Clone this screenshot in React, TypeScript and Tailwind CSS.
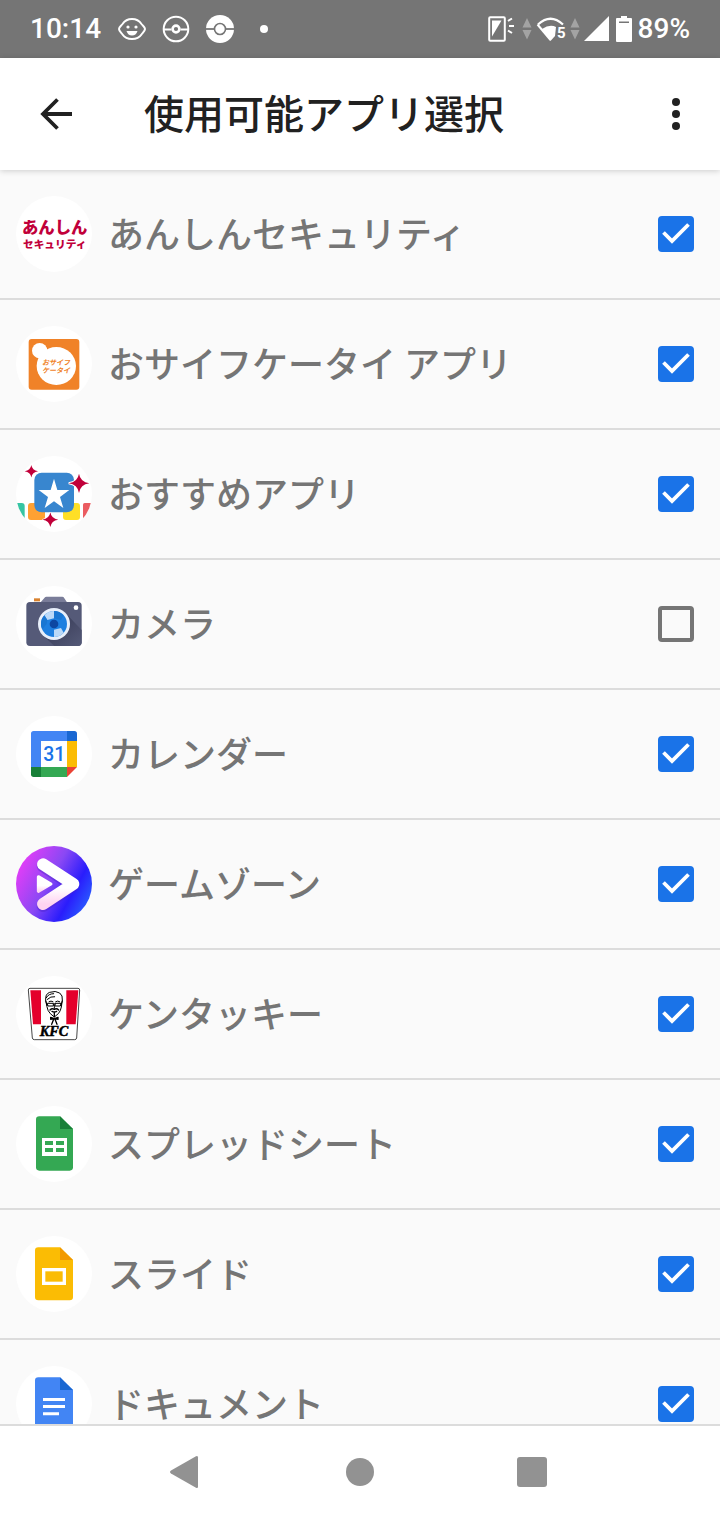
import { useState, type ReactNode } from "react";

function Badge({ children }: { children: ReactNode }) {
  return (
    <svg
      viewBox="0 0 228 228"
      className="size-[76px] shrink-0 rounded-full bg-white"
      aria-hidden="true"
    >
      {children}
    </svg>
  );
}

function SecurityIcon() {
  return (
    <Badge>
      <g fill="#c1003a" fontWeight="900" textAnchor="middle">
        <text x="116" y="110" fontSize="49">あんしん</text>
        <text x="116" y="157" fontSize="32">セキュリティ</text>
      </g>
    </Badge>
  );
}

function WalletIcon() {
  return (
    <Badge>
      <rect x="38" y="39" width="152" height="152" rx="9" fill="#f08228" />
      <circle cx="71" cy="74" r="23" fill="#fff" />
      <path d="M60 92q16 0 12 18l24-28q-12 2-12-12z" fill="#fff" />
      <ellipse cx="121" cy="120" rx="59" ry="57" fill="#fff" />
      <g fill="#f08228" fontWeight="700" fontStyle="italic" textAnchor="middle">
        <text x="120" y="118" fontSize="21">おサイフ</text>
        <text x="120" y="141" fontSize="21">ケータイ</text>
      </g>
    </Badge>
  );
}

const sparkle = "M0-29Q4-4 31 0Q4 4 0 29Q-4 4-31 0Q-4-4 0-29Z";

function RecommendIcon() {
  return (
    <Badge>
      <rect x="-20" y="141" width="46" height="51" rx="9" fill="#36c5a3" />
      <rect x="36" y="141" width="51" height="51" rx="9" fill="#ffa133" />
      <rect x="141" y="141" width="51" height="51" rx="9" fill="#ffdf26" />
      <rect x="201" y="141" width="50" height="51" rx="5" fill="#eb5c61" />
      <rect x="55" y="50" width="119" height="119" rx="22" fill="#3886cf" />
      <path
        d="M114 68l10 34 36 0-28 21 10 33-28-20-28 20 10-33-28-21 36 0z"
        fill="#fff"
      />
      <g fill="#c1003a" stroke="#fff" strokeWidth="6" paintOrder="stroke">
        <path d={sparkle} transform="translate(46 46) scale(.65)" />
        <path d={sparkle} transform="translate(189 82)" />
        <path d={sparkle} transform="translate(103 191) scale(.76)" />
      </g>
    </Badge>
  );
}

function CameraIcon() {
  return (
    <Badge>
      <defs>
        <linearGradient id="camera-shade" x1="0" y1="0" x2="1" y2="1">
          <stop offset=".3" stopColor="#3c405c" />
          <stop offset="1" stopColor="#555a78" />
        </linearGradient>
      </defs>
      <rect x="54" y="37" width="18" height="9" fill="#d9822f" />
      <path d="M74 49L87 34q1-2 4-2h48q3 0 4 2l10 15z" fill="#7a7d99" />
      <rect x="31" y="48" width="166" height="132" rx="11" fill="#555a78" />
      <path d="M82 149l33 31h71q11 0 11-11v-37l-45-47z" fill="url(#camera-shade)" />
      <circle cx="180" cy="65" r="7" fill="#fff" />
      <circle cx="114" cy="114" r="48" fill="#e8effa" />
      <circle cx="114" cy="114" r="39" fill="#1e7fe0" />
      <path d="M85 88a39 39 0 0 1 29-13v22l-20 5z" fill="#bbd9f8" />
      <path d="M143 140a39 39 0 0 1-29 13v-22l21-5z" fill="#bbd9f8" />
      <path d="M114 75a39 39 0 0 1 29 13l-8 14-21-5z" fill="#1976d2" />
      <path d="M85 88a39 39 0 0 0-6 42l13-16 2-12z" fill="#1976d2" />
      <circle cx="114" cy="114" r="13" fill="#0d47a1" />
    </Badge>
  );
}

function CalendarIcon() {
  return (
    <Badge>
      <path d="M53 45h100v30H75v78H45V53q0-8 8-8z" fill="#4285f4" />
      <path d="M153 45h22q8 0 8 8v22h-30z" fill="#1967d2" />
      <path d="M153 75h30v78h-30z" fill="#fbbc04" />
      <path d="M75 153h78v30H75z" fill="#34a853" />
      <path d="M45 153h30v30H53q-8 0-8-8z" fill="#188038" />
      <path d="M153 153h30l-30 30z" fill="#ea4335" />
      <text
        x="115"
        y="136"
        fontSize="58"
        fontWeight="500"
        textAnchor="middle"
        fill="#1a73e8"
        className="font-['Roboto',sans-serif]"
      >
        31
      </text>
    </Badge>
  );
}

function GameZoneIcon() {
  return (
    <Badge>
      <defs>
        <linearGradient id="zone-bg" x1="0" y1=".2" x2="1" y2=".75">
          <stop offset="0" stopColor="#ee3cf8" />
          <stop offset=".45" stopColor="#8a48f4" />
          <stop offset=".75" stopColor="#2a1dfc" />
          <stop offset="1" stopColor="#2a62ff" />
        </linearGradient>
        <linearGradient id="zone-arrow" x1="0" y1="0" x2="0" y2="1">
          <stop offset="0" stopColor="#fff" />
          <stop offset=".6" stopColor="#fff" />
          <stop offset="1" stopColor="#ffd3f1" />
        </linearGradient>
      </defs>
      <rect width="228" height="228" fill="url(#zone-bg)" />
      <g strokeLinejoin="round" strokeLinecap="round">
        <path
          d="M81 60l91 58-91 61"
          fill="none"
          stroke="#4a22c8"
          strokeOpacity=".4"
          strokeWidth="38"
        />
        <path d="M81 55l91 59-91 60" fill="none" stroke="url(#zone-arrow)" strokeWidth="36" />
        <path
          d="M67 92l38 22-38 22z"
          fill="url(#zone-arrow)"
          stroke="url(#zone-arrow)"
          strokeWidth="9"
        />
      </g>
    </Badge>
  );
}

function ChickenIcon() {
  return (
    <Badge>
      <path
        d="M42 37h144q5 0 5 5l-9 144q-1 5-6 5H55q-5 0-6-5L37 42q0-5 5-5z"
        fill="#fff"
        stroke="#222"
        strokeWidth="2.5"
      />
      <path d="M43 43h32v102H51z" fill="#e4002b" />
      <path d="M151 43h36l-8 102h-28z" fill="#e4002b" />
      <g fill="none" stroke="#000" strokeWidth="3" strokeLinecap="round" strokeLinejoin="round">
        <path d="M89 72q-2-18 12-23 18-6 30 2 10 7 8 22l-3 20q-2 12-9 20l-12 10-12-10q-8-8-10-20z" />
        <path d="M91 65q6-12 22-12M94 70q10-10 22-8M89 74l4 14M139 74l-4 14" />
        <path d="M95 82h17v8H97zM118 82h17l-2 8h-15zM112 84h6" />
        <path d="M99 77q6-4 12 0M119 77q6-4 12 0M115 88v9" />
        <path d="M102 102q6-6 13-2 7-4 13 2M108 106q7 4 14 0M115 108v14" strokeWidth="4" />
        <path d="M104 124l11 4 11-4M104 124v6l11-2 11 2v-6M113 130l-6 15M117 130l6 15" strokeWidth="4" />
      </g>
      <text
        x="114"
        y="181"
        fontSize="43"
        fontWeight="700"
        fontStyle="italic"
        textAnchor="middle"
        stroke="#000"
        strokeWidth="1.5"
        className="font-['Liberation_Serif',serif]"
      >
        KFC
      </text>
    </Badge>
  );
}

function SheetsIcon() {
  return (
    <Badge>
      <path d="M70 31h62l39 38v115q0 10-10 10H70q-10 0-10-10V41q0-10 10-10z" fill="#34a853" />
      <path d="M132 31l39 38h-39z" fill="#188038" />
      <path
        d="M78 96h75v54H78zM87 105v12h24v-12zM120 105v12h24v-12zM87 126v12h24v-12zM120 126v12h24v-12z"
        fill="#fff"
        fillRule="evenodd"
      />
    </Badge>
  );
}

function SlidesIcon() {
  return (
    <Badge>
      <path d="M67 34h65l39 38v111q0 10-10 10H67q-10 0-10-10V44q0-10 10-10z" fill="#fbbc04" />
      <path d="M132 34l39 38h-39z" fill="#f29900" />
      <rect x="83" y="101" width="62" height="41" fill="none" stroke="#fff" strokeWidth="10" />
    </Badge>
  );
}

function DocsIcon() {
  return (
    <Badge>
      <path d="M67 34h65l39 38v111q0 10-10 10H67q-10 0-10-10V44q0-10 10-10z" fill="#4285f4" />
      <path d="M132 34l39 38h-39z" fill="#1967d2" />
      <path d="M81 96h66v9H81zM81 117h66v9H81zM81 139h48v9H81z" fill="#fff" />
    </Badge>
  );
}

const apps = [
  { name: "あんしんセキュリティ", icon: <SecurityIcon />, allowed: true },
  { name: "おサイフケータイ アプリ", icon: <WalletIcon />, allowed: true },
  { name: "おすすめアプリ", icon: <RecommendIcon />, allowed: true },
  { name: "カメラ", icon: <CameraIcon />, allowed: false },
  { name: "カレンダー", icon: <CalendarIcon />, allowed: true },
  { name: "ゲームゾーン", icon: <GameZoneIcon />, allowed: true },
  { name: "ケンタッキー", icon: <ChickenIcon />, allowed: true },
  { name: "スプレッドシート", icon: <SheetsIcon />, allowed: true },
  { name: "スライド", icon: <SlidesIcon />, allowed: true },
  { name: "ドキュメント", icon: <DocsIcon />, allowed: true },
];

function DataArrows() {
  return (
    <svg viewBox="0 0 10 22" className="h-[22px] w-[10px]" fill="#a3a3a3">
      <path d="M5 0l4.500 9.500h-9zM5 21.500l4.500-9.500h-9z" />
    </svg>
  );
}

function StatusBar() {
  return (
    <div className="flex h-[58px] shrink-0 items-center justify-between bg-[#757575] px-[30px] font-['Roboto',sans-serif] text-[28px] font-medium text-white">
      <div className="flex items-center gap-4">
        <span className="w-[72px]">10:14</span>
        <svg viewBox="0 0 28 24" className="h-6 w-7" fill="none" stroke="#fff" strokeWidth="2">
          <path d="M14 2C9.500 2 6.500 4 4.500 7 3 9 1 10 1 12s2 3.500 3.500 5.500c2 3 5 4.500 9.500 4.500s7.500-1.500 9.500-4.500C25 15.500 27 14 27 12s-2-3-3.500-5C21.500 4 18.500 2 14 2z" />
          <circle cx="10" cy="10" r="1.600" fill="#fff" stroke="none" />
          <circle cx="18" cy="10" r="1.600" fill="#fff" stroke="none" />
          <path d="M8.500 14h11q-1.500 4.500-5.500 4.500T8.500 14z" fill="#fff" stroke="none" />
        </svg>
        <svg viewBox="0 0 28 28" className="size-7" fill="none" stroke="#fff" strokeWidth="2">
          <circle cx="14" cy="14" r="12.300" />
          <path d="M2 14.500h7.500M18.500 14.500H26" />
          <circle cx="14" cy="14" r="3.400" strokeWidth="2.600" />
        </svg>
        <svg viewBox="0 0 28 28" className="size-7">
          <circle cx="14" cy="14" r="14" fill="#fff" />
          <path d="M0 14h28" stroke="#757575" strokeWidth="1.800" />
          <circle cx="14" cy="14" r="5.500" fill="#fff" stroke="#757575" strokeWidth="1.600" />
        </svg>
        <svg viewBox="0 0 28 28" className="size-7">
          <circle cx="14" cy="14" r="4" fill="#fff" />
        </svg>
      </div>

      <div className="flex items-center">
        <svg viewBox="0 0 26 26" className="mr-2 size-[26px]" fill="none" stroke="#fff" strokeWidth="2">
          <rect x="1.200" y="1.200" width="15.600" height="23.600" rx="1" />
          <path d="M4 4.500h9.500L4 20.500z" fill="#fff" stroke="none" />
          <path d="M20 5l4-2.500M21 10h5M20 14.500l4 2.500" />
        </svg>
        <DataArrows />
        <svg viewBox="0 0 30 26" className="mx-1 h-[26px] w-[30px]" fill="none">
          <path d="M2 8.500Q14.500-3 27 8.500" stroke="#fff" strokeWidth="2.200" />
          <path d="M1.500 8.500L14.500 24" stroke="#fff" strokeWidth="2" />
          <path d="M6 13q8-5.500 14-2l-1 9-4.500 5z" fill="#fff" />
          <text x="21" y="22" fontSize="15" fontWeight="700" fill="#fff">
            5
          </text>
        </svg>
        <DataArrows />
        <svg viewBox="0 0 26 26" className="ml-1 size-[26px]">
          <path d="M0 25L25 0v25z" fill="#fff" />
        </svg>
        <svg viewBox="0 0 16 26" className="mx-1.5 h-[26px] w-4">
          <path
            d="M5 0h6v2h4q1 0 1 1v22q0 1-1 1H1q-1 0-1-1V3q0-1 1-1h4zM3 5.500v1.500h10V5.500z"
            fill="#fff"
            fillRule="evenodd"
          />
        </svg>
        <span>89%</span>
      </div>
    </div>
  );
}

function Header() {
  return (
    <header className="z-10 flex h-28 shrink-0 items-center bg-white pr-[26px] pl-10 text-[#212121] shadow-[0_1px_6px_rgba(0,0,0,0.18)]">
      <button type="button" aria-label="戻る" className="mr-[72px]">
        <svg viewBox="0 0 32 32" className="size-8" fill="none" stroke="currentColor" strokeWidth="3.800">
          <path d="M32 16H3M17.500 1.500L3 16l14.500 14.500" />
        </svg>
      </button>
      <h1 className="flex-1 pb-1 text-[40px] font-medium">使用可能アプリ選択</h1>
      <button type="button" aria-label="その他">
        <svg viewBox="0 0 36 36" className="size-9" fill="currentColor">
          <circle cx="18" cy="6" r="4" />
          <circle cx="18" cy="18" r="4" />
          <circle cx="18" cy="30" r="4" />
        </svg>
      </button>
    </header>
  );
}

function NavBar() {
  return (
    <nav className="grid h-24 shrink-0 grid-cols-3 items-center justify-items-center border-t-2 border-[#dcdcdc] bg-white px-[99px] pb-0.5 text-[#929292]">
      <button type="button" aria-label="戻る">
        <svg viewBox="0 0 48 48" className="size-12" fill="currentColor">
          <path d="M9 22.500L34 8.300q2-1 2 1.200v29q0 2.200-2 1.200L9 25.500q-2-1.500 0-3z" />
        </svg>
      </button>
      <button type="button" aria-label="ホーム">
        <svg viewBox="0 0 48 48" className="size-12" fill="currentColor">
          <circle cx="24" cy="24" r="14" />
        </svg>
      </button>
      <button type="button" aria-label="アプリ履歴">
        <svg viewBox="0 0 48 48" className="size-12" fill="currentColor">
          <rect x="7" y="9" width="30" height="30" rx="3" />
        </svg>
      </button>
    </nav>
  );
}

export default function App() {
  const [allowed, setAllowed] = useState(apps.map((app) => app.allowed));

  const toggle = (index: number) =>
    setAllowed((prev) => prev.map((value, i) => (i === index ? !value : value)));

  return (
    <div className="flex h-screen flex-col bg-[#fafafa] font-['Noto_Sans_CJK_JP',sans-serif]">
      <StatusBar />
      <Header />

      {/* アプリ一覧 */}
      <ul className="min-h-0 flex-1 overflow-y-auto [scrollbar-width:none]">
        {apps.map((app, index) => (
          <li key={app.name} className="border-b-2 border-[#dcdcdc]">
            <label className="flex h-32 items-center gap-4 pr-[26px] pl-4">
              {app.icon}
              <span className="flex-1 pb-1 text-4xl font-medium text-[#757575]">{app.name}</span>
              <span className="grid">
                <input
                  type="checkbox"
                  checked={allowed[index]}
                  onChange={() => toggle(index)}
                  className="peer col-start-1 row-start-1 size-9 appearance-none rounded border-4 border-[#757575] checked:border-[#1a73e8] checked:bg-[#1a73e8]"
                />
                <svg
                  viewBox="0 0 36 36"
                  className="pointer-events-none invisible col-start-1 row-start-1 size-9 peer-checked:visible"
                  fill="none"
                  stroke="#fff"
                  strokeWidth="3.800"
                >
                  <path d="M5.500 16.500L14 25 30.500 8.500" />
                </svg>
              </span>
            </label>
          </li>
        ))}
      </ul>

      <NavBar />
    </div>
  );
}
